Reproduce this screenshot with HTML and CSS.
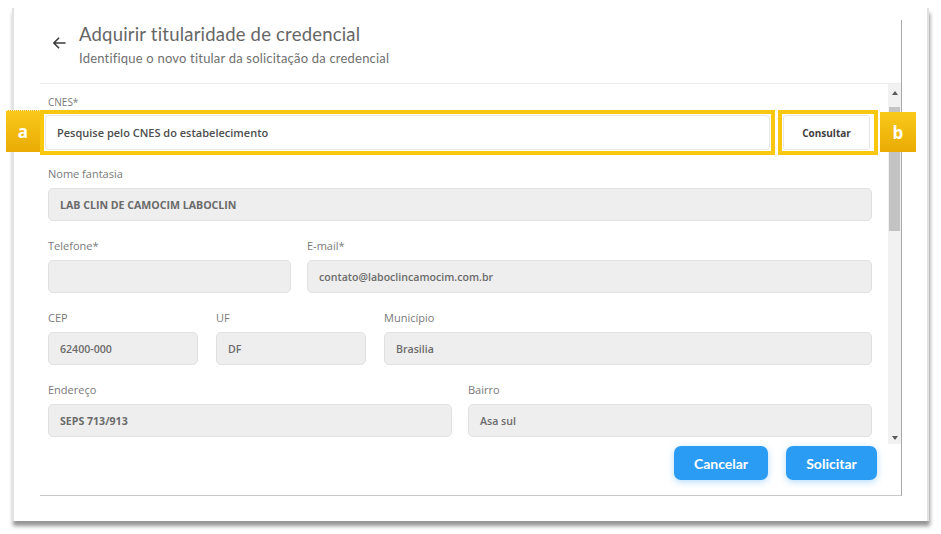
FILE: index.html
```html
<!DOCTYPE html>
<html lang="pt-BR">
<head>
<meta charset="utf-8">
<title>Adquirir titularidade de credencial</title>
<link rel="stylesheet" href="styles.css">
</head>
<body>
<div class="frame">
  <div class="dialog">
    <header class="dlg-head">
      <span class="back">
        <svg width="14" height="12" viewBox="0 0 14 12" aria-hidden="true"><path d="M13 6H1.8M6.6 1.2 1.8 6l4.8 4.8" fill="none" stroke="#3a3a3a" stroke-width="1.6" stroke-linecap="round" stroke-linejoin="round"/></svg>
      </span>
      <div class="titles">
        <h1 class="title">Adquirir titularidade de credencial</h1>
        <p class="subtitle">Identifique o novo titular da solicitação da credencial</p>
      </div>
    </header>
    <div class="dlg-body">
      <div class="form">
        <div class="field">
          <div class="label">CNES*</div>
          <div class="cnes-row">
            <span class="badge badge-a">a</span>
            <div class="hl hl-a"><div class="inp inp-white">Pesquise pelo CNES do estabelecimento</div></div>
            <div class="hl hl-b"><div class="btn-consultar">Consultar</div></div>
            <span class="badge badge-b">b</span>
          </div>
        </div>
        <div class="row row-1 first">
          <div class="field">
            <div class="label">Nome fantasia</div>
            <div class="inp inp-bold">LAB CLIN DE CAMOCIM LABOCLIN</div>
          </div>
        </div>
        <div class="row row-2">
          <div class="field">
            <div class="label">Telefone*</div>
            <div class="inp"></div>
          </div>
          <div class="field">
            <div class="label">E-mail*</div>
            <div class="inp">contato@laboclincamocim.com.br</div>
          </div>
        </div>
        <div class="row row-3">
          <div class="field">
            <div class="label">CEP</div>
            <div class="inp">62400-000</div>
          </div>
          <div class="field">
            <div class="label">UF</div>
            <div class="inp">DF</div>
          </div>
          <div class="field">
            <div class="label">Município</div>
            <div class="inp">Brasilia</div>
          </div>
        </div>
        <div class="row row-4">
          <div class="field">
            <div class="label">Endereço</div>
            <div class="inp inp-bold">SEPS 713/913</div>
          </div>
          <div class="field">
            <div class="label">Bairro</div>
            <div class="inp">Asa sul</div>
          </div>
        </div>
      </div>
      <div class="scrollbar">
        <span class="sb-arrow sb-up"></span>
        <div class="sb-thumb"></div>
        <div class="sb-fill"></div>
        <span class="sb-arrow sb-down"></span>
      </div>
    </div>
    <footer class="dlg-foot">
      <button class="btn btn-cancel">Cancelar</button>
      <button class="btn btn-submit">Solicitar</button>
    </footer>
  </div>
</div>
</body>
</html>
```
FILE: styles.css
```css
* { box-sizing: border-box; }
html, body { margin: 0; padding: 0; background: #fff; }
body { font-family: "Open Sans", "Liberation Sans", sans-serif; width: 941px; height: 534px; overflow: hidden; }

.frame {
  margin: 8px 0 0 12px;
  width: 917px;
  height: 513px;
  background: #fff;
  border-left: 2px solid #e2e2e2;
  border-right: 2px solid #e2e2e2;
  padding: 12px 0 0 26px;
  box-shadow: 1px 5px 4px rgba(0, 0, 0, 0.42);
}

.dialog {
  width: 862px;
  height: 476px;
  border-right: 1px solid #a9a9a9;
  border-bottom: 1px solid #c9c9c9;
  display: flex;
  flex-direction: column;
}

.dlg-head {
  height: 64px;
  flex: none;
  display: flex;
  align-items: flex-start;
  padding: 3px 0 0 12px;
  border-bottom: 1px solid #ececec;
}
.back { display: block; width: 14px; height: 12px; margin-top: 14px; }
.back svg { display: block; }
.titles { margin-left: 13px; }
.title {
  margin: 0;
  font-family: Lato, "Open Sans", sans-serif;
  font-weight: 400;
  font-size: 18.5px;
  line-height: 22px;
  color: #666;
  letter-spacing: 0.2px;
}
.subtitle {
  margin: 5px 0 0;
  font-family: Lato, "Open Sans", sans-serif;
  font-size: 13px;
  line-height: 16px;
  color: #6f6f6f;
  letter-spacing: 0.2px;
}

.dlg-body { height: 360px; flex: none; display: flex; }
.form { width: 848px; min-width: 0; flex: none; padding: 11px 16px 0 8px; }

.label {
  font-size: 11px;
  line-height: 14px;
  color: #7a7a7a;
  margin-bottom: 7px;
  white-space: nowrap;
}
.form > .field > .label { margin-bottom: 1px; font-size: 10px; }

.cnes-row {
  position: relative;
  margin-left: -8px;
  width: 838px;
  display: flex;
  gap: 3px;
}
.hl { border: 4px solid #f9c80e; padding: 1px; height: 45px; }
.hl-a { flex: 1; min-width: 0; }
.hl-b { width: 100px; flex: none; }

.inp {
  height: 33px;
  border: 1px solid #e1e1e1;
  border-radius: 5px;
  background: #eeeeee;
  padding: 0 11px;
  display: flex;
  align-items: center;
  font-size: 10.6px;
  font-weight: 600;
  color: #6b6b6b;
  white-space: nowrap;
  min-width: 0;
}
.inp-bold { font-weight: 700; color: #6a6a6a; }
.inp-white {
  height: 35px;
  background: #fff;
  border-color: #e6e6e6;
  border-radius: 4px;
  color: #4d4d4d;
  font-size: 11px;
  font-weight: 600;
}
.btn-consultar {
  width: 87px;
  height: 35px;
  border: 1px solid #e6e6e6;
  border-radius: 3px;
  background: #fff;
  display: flex;
  align-items: center;
  justify-content: center;
  font-size: 10px;
  font-weight: 700;
  color: #3f3f3f;
}

.badge {
  position: absolute;
  top: 0;
  display: flex;
  align-items: center;
  justify-content: center;
  background: linear-gradient(#f9c91a, #eaab04);
  color: #fff;
  font-family: "Open Sans", sans-serif;
  font-weight: 700;
  font-size: 17px;
  z-index: 2;
}
.badge-a { left: -34px; width: 34px; height: 42px; border-top: 1px dotted #fff3c0; }
.badge-b { right: -38px; top: 2px; width: 36px; height: 40px; }

.row { display: grid; gap: 16px; margin-top: 18px; }
.row.first { margin-top: 12px; }
.row-1 { grid-template-columns: minmax(0, 1fr); }
.row-2 { grid-template-columns: 243px minmax(0, 1fr); }
.row-3 { grid-template-columns: 150px 150px minmax(0, 1fr); gap: 18px; }
.row-4 { grid-template-columns: minmax(0, 1fr) minmax(0, 1fr); }

.scrollbar {
  width: 13px;
  flex: none;
  background: #f1f1f1;
  display: flex;
  flex-direction: column;
  align-items: center;
  padding: 7px 0 4px;
}
.sb-arrow { width: 0; height: 0; border-left: 3px solid transparent; border-right: 3px solid transparent; flex: none; }
.sb-up { border-bottom: 4px solid #5a5a5a; }
.sb-down { border-top: 4px solid #5a5a5a; }
.sb-thumb { width: 11px; height: 124px; margin-top: 12px; background: #c3c3c3; flex: none; }
.sb-fill { flex: 1; }

.dlg-foot {
  flex: 1;
  display: flex;
  justify-content: flex-end;
  align-items: flex-start;
  gap: 18px;
  padding: 2px 24px 0 0;
}
.btn {
  height: 34px;
  border: 0;
  border-radius: 7px;
  background: #2b9cf4;
  color: #fff;
  font-family: Lato, "Open Sans", sans-serif;
  font-weight: 700;
  font-size: 14px;
  box-shadow: 0 2px 7px rgba(43, 156, 244, 0.35);
  padding: 0;
}
.btn-cancel { width: 94px; }
.btn-submit { width: 91px; }
```
